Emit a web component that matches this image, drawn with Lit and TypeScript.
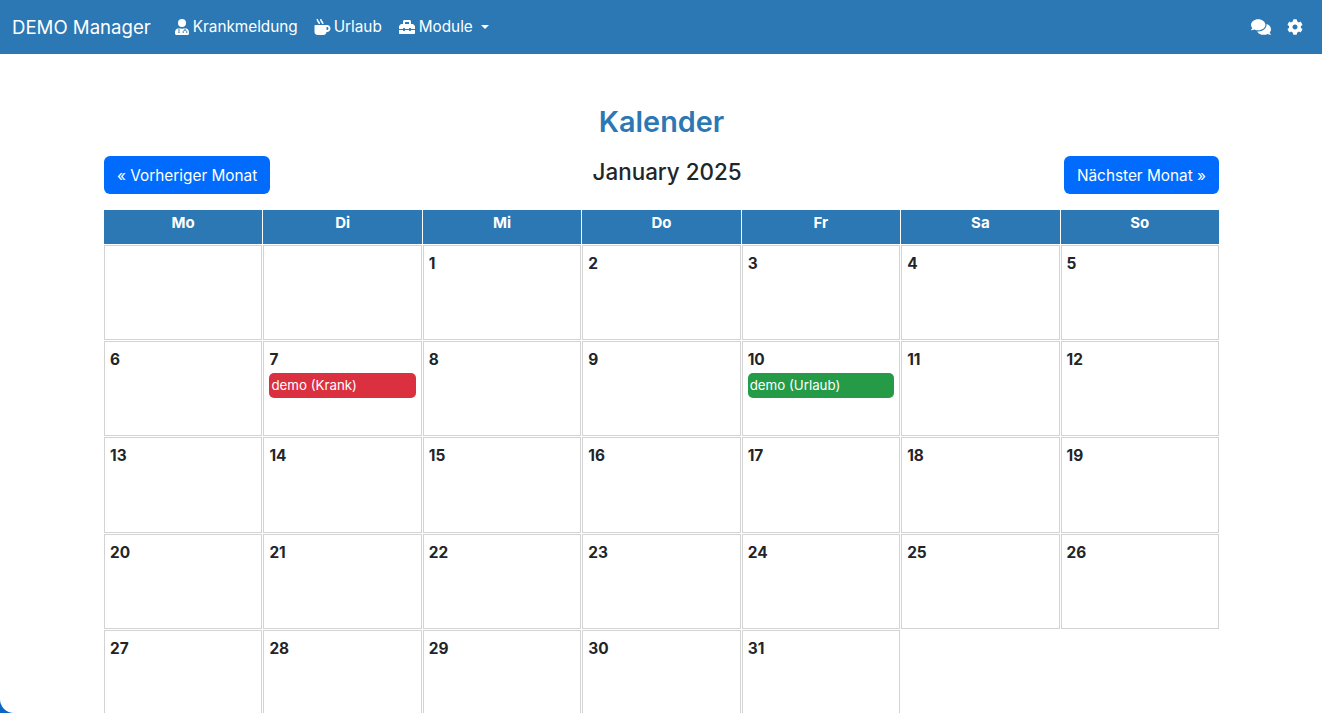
import { LitElement, html, css, svg, nothing } from 'lit';
import { customElement } from 'lit/decorators.js';

const WEEKDAYS = ['Mo', 'Di', 'Mi', 'Do', 'Fr', 'Sa', 'So'];

const EVENTS: Record<number, { label: string; kind: string }> = {
  7: { label: 'demo (Krank)', kind: 'sick' },
  10: { label: 'demo (Urlaub)', kind: 'leave' },
};

// January 2025 starts on a Wednesday, so two empty cells first
const DAYS: (number | null)[] = [null, null, ...Array.from({ length: 31 }, (_, i) => i + 1)];

const userMd = svg`
  <circle cx="224" cy="128" r="128" />
  <path d="M130 288C58 292 0 350 0 422v42c0 26 22 48 48 48h352c26 0 48-22 48-48v-42c0-72-58-130-130-134-26 14-58 24-94 24s-68-10-94-24z" />
  <path class="cut" d="M128 296v104M320 296v58M262 448v-34c0-30 24-54 58-54s58 24 58 54v34" />
  <circle class="cut-fill" cx="128" cy="424" r="26" />
`;

const mugHot = svg`<path d="M127.1 146.5c1.3 7.7 8 13.5 16 13.5h16.5c9.8 0 17.6-8.5 16.3-18-3.8-28.2-16.4-54.2-36.6-74.7-14.4-14.7-23.6-33.3-26.4-53.5C111.8 5.9 105 0 96.8 0H80.4C70.6 0 63 8.5 64.1 18c3.9 31.9 18 61.3 40.6 84.4 12 12.2 19.7 27.5 22.4 44.1zm112 0c1.3 7.7 8 13.5 16 13.5h16.5c9.8 0 17.6-8.5 16.3-18-3.8-28.2-16.4-54.2-36.6-74.7-14.4-14.7-23.6-33.3-26.4-53.5C223.8 5.9 217 0 208.8 0h-16.4c-9.8 0-17.5 8.5-16.3 18 3.9 31.9 18 61.3 40.6 84.4 12 12.2 19.7 27.5 22.4 44.1zM400 192H32c-17.7 0-32 14.3-32 32v192c0 53 43 96 96 96h192c53 0 96-43 96-96h16c61.8 0 112-50.2 112-112s-50.2-112-112-112zm0 160h-16v-96h16c26.5 0 48 21.5 48 48s-21.5 48-48 48z" />`;

const toolbox = svg`<path d="M502.63 214.63l-45.25-45.25c-6-6-14.14-9.37-22.63-9.37H384V80c0-26.51-21.49-48-48-48H176c-26.51 0-48 21.49-48 48v80H77.25c-8.49 0-16.62 3.37-22.63 9.37L9.37 214.63c-6 6-9.37 14.14-9.37 22.63V320h128v-16c0-8.84 7.16-16 16-16h32c8.84 0 16 7.16 16 16v16h128v-16c0-8.84 7.16-16 16-16h32c8.84 0 16 7.16 16 16v16h128v-82.75c0-8.48-3.37-16.62-9.37-22.62zM320 160H192V96h128v64zm64 208c0 8.84-7.16 16-16 16h-32c-8.84 0-16-7.16-16-16v-16H192v16c0 8.84-7.16 16-16 16h-32c-8.84 0-16-7.16-16-16v-16H0v96c0 17.67 14.33 32 32 32h448c17.67 0 32-14.33 32-32v-96H384v16z" />`;

const comments = svg`<path d="M416 192c0-88.4-93.1-160-208-160S0 103.6 0 192c0 34.3 14.1 65.9 38 92-13.4 30.2-35.5 54.2-35.8 54.5-2.2 2.3-2.8 5.7-1.5 8.7S4.8 352 8 352c36.6 0 66.9-12.3 88.7-25 32.2 15.7 70.3 25 111.3 25 114.9 0 208-71.6 208-160zm122 220c23.9-26 38-57.7 38-92 0-66.9-53.5-124.2-129.3-148.1.9 6.6 1.3 13.3 1.3 20.1 0 105.9-107.7 192-240 192-10.8 0-21.3-.8-31.7-1.9C207.8 439.6 281.8 480 368 480c41 0 79.1-9.2 111.3-25 21.8 12.7 52.1 25 88.7 25 3.2 0 6.1-1.9 7.3-4.8 1.3-2.9.7-6.3-1.5-8.7-.3-.3-22.4-24.2-35.8-54.5z" />`;

const cog = svg`<path d="M487.4 315.7l-42.6-24.6c4.3-23.2 4.3-47 0-70.2l42.6-24.6c4.9-2.8 7.1-8.6 5.5-14-11.1-35.6-30-67.8-54.7-94.6-3.8-4.1-10-5.1-14.8-2.3L380.8 110c-17.9-15.4-38.5-27.3-60.8-35.1V25.8c0-5.6-3.9-10.5-9.4-11.7-36.7-8.2-74.3-7.8-109.2 0-5.5 1.2-9.4 6.1-9.4 11.7V75c-22.2 7.9-42.8 19.8-60.8 35.1L88.7 85.5c-4.9-2.8-11-1.9-14.8 2.3-24.7 26.7-43.6 58.9-54.7 94.6-1.7 5.4.6 11.2 5.5 14L67.3 221c-4.3 23.2-4.3 47 0 70.2l-42.6 24.6c-4.9 2.8-7.1 8.6-5.5 14 11.1 35.6 30 67.8 54.7 94.6 3.8 4.1 10 5.1 14.8 2.3l42.6-24.6c17.9 15.4 38.5 27.3 60.8 35.1v49.2c0 5.6 3.9 10.5 9.4 11.7 36.7 8.2 74.3 7.8 109.2 0 5.5-1.2 9.4-6.1 9.4-11.7v-49.2c22.2-7.9 42.8-19.8 60.8-35.1l42.6 24.6c4.9 2.8 11 1.9 14.8-2.3 24.7-26.7 43.6-58.9 54.7-94.6 1.5-5.5-.7-11.3-5.6-14.1zM256 336c-44.1 0-80-35.9-80-80s35.9-80 80-80 80 35.9 80 80-35.9 80-80 80z" />`;

@customElement('app-root')
class AppRoot extends LitElement {
  static styles = css`
    :host {
      display: flex;
      flex-direction: column;
      height: 100vh;
      overflow: hidden;
      background: #0a68c4;
      font-family: Inter, "Liberation Sans", sans-serif;
      font-size: 16px;
      line-height: 24px;
      color: #212529;
    }
    .navbar {
      flex: none;
      box-sizing: border-box;
      display: flex;
      align-items: center;
      height: 54px;
      padding: 0 19px 1px 12px;
      background: #2b78b4;
      color: #fff;
    }
    .brand {
      font-size: 18.6px;
      margin-right: 23px;
    }
    .links {
      display: flex;
      align-items: center;
      gap: 16px;
      flex: 1;
    }
    .link {
      display: flex;
      align-items: center;
      gap: 3px;
      font-size: 15.3px;
    }
    .caret {
      width: 0;
      height: 0;
      margin-left: 5px;
      border-top: 4px solid #fff;
      border-left: 4px solid transparent;
      border-right: 4px solid transparent;
    }
    .tools {
      display: flex;
      align-items: center;
      gap: 16px;
    }
    svg {
      fill: #fff;
      display: block;
    }
    svg .cut {
      fill: none;
      stroke: #2b78b4;
      stroke-width: 30;
    }
    svg .cut-fill {
      fill: #2b78b4;
    }
    .main {
      flex: 1;
      min-height: 0;
      overflow: hidden;
      padding: 0 103px 0 104px;
      background: #fff;
      border-bottom-left-radius: 14px;
    }
    .calendar {
      padding-top: 48px;
    }
    h2 {
      margin: 0 0 14px;
      text-align: center;
      font-size: 28.8px;
      line-height: 40px;
      font-weight: 600;
      color: #2b78b4;
    }
    .month-bar {
      display: flex;
      justify-content: space-between;
      align-items: flex-start;
      margin-bottom: 16px;
    }
    h3 {
      margin: 0;
      font-size: 22.4px;
      line-height: 32px;
      font-weight: 500;
    }
    .btn {
      box-sizing: border-box;
      height: 38px;
      padding: 1px 13px 0;
      border: none;
      border-radius: 6px;
      background: #006bfd;
      color: #fff;
      font: inherit;
      font-size: 15.35px;
    }
    .grid {
      display: grid;
      grid-template-columns: repeat(7, 1fr);
      grid-template-rows: 34px;
      grid-auto-rows: 95.2px;
      gap: 1px;
    }
    .head {
      padding-top: 1px;
      background: #2b78b4;
      color: #fff;
      font-weight: 700;
      font-size: 15px;
      text-align: center;
    }
    .cell {
      border: 1px solid #d3d3d3;
      padding: 6px 5px 5px;
    }
    .num {
      font-weight: 700;
      font-size: 15.4px;
    }
    .event {
      margin-top: 1px;
      height: 25px;
      padding: 0 2px;
      border-radius: 5px;
      color: #fff;
      font-size: 13.3px;
      line-height: 25px;
    }
    .sick {
      background: #db3040;
    }
    .leave {
      background: #259b47;
    }
  `;

  private _renderCell(day: number | null) {
    if (day === null) return html`<div class="cell"></div>`;
    const ev = EVENTS[day];
    return html`
      <div class="cell">
        <div class="num">${day}</div>
        ${ev ? html`<div class="event ${ev.kind}">${ev.label}</div>` : nothing}
      </div>
    `;
  }

  render() {
    return html`
      <nav class="navbar">
        <span class="brand">DEMO Manager</span>
        <div class="links">
          <span class="link">
            <svg width="16" height="16" viewBox="-32 0 512 512">${userMd}</svg>
            Krankmeldung
          </span>
          <span class="link">
            <svg width="17" height="16" viewBox="0 0 512 512">${mugHot}</svg>
            Urlaub
          </span>
          <span class="link">
            <svg width="18" height="16" viewBox="0 0 512 512">${toolbox}</svg>
            Module
            <span class="caret"></span>
          </span>
        </div>
        <div class="tools">
          <svg width="20" height="18" viewBox="0 0 576 512">${comments}</svg>
          <svg width="16" height="16" viewBox="0 0 512 512">${cog}</svg>
        </div>
      </nav>
      <main class="main">
        <div class="calendar">
          <h2>Kalender</h2>
          <div class="month-bar">
            <button class="btn">« Vorheriger Monat</button>
            <h3>January 2025</h3>
            <button class="btn">Nächster Monat »</button>
          </div>
          <div class="grid">
            ${WEEKDAYS.map(d => html`<div class="head">${d}</div>`)}
            ${DAYS.map(d => this._renderCell(d))}
          </div>
        </div>
      </main>
    `;
  }
}
